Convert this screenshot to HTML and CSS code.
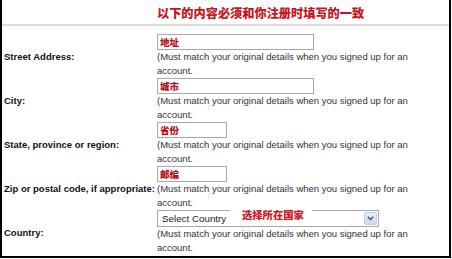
FILE: index.html
```html
<!DOCTYPE html>
<html>
<head>
    <title>Account details</title>
    <link rel="stylesheet" href="styles.css">
</head>
<body>

    <div class="frame">

        <!-- Aviso -->
        <div class="title-row">
            <span class="title">以下的内容必须和你注册时填写的一致</span>
        </div>

        <!-- Formulario -->
        <div class="form-grid">
            <div class="label">Street Address:</div>
            <div class="field">
                <input type="text" class="text-field long" value="地址">
                <p class="hint">(Must match your original details when you signed up for an account.</p>
            </div>

            <div class="label">City:</div>
            <div class="field">
                <input type="text" class="text-field long" value="城市">
                <p class="hint">(Must match your original details when you signed up for an account.</p>
            </div>

            <div class="label">State, province or region:</div>
            <div class="field">
                <input type="text" class="text-field short" value="省份">
                <p class="hint">(Must match your original details when you signed up for an account.</p>
            </div>

            <div class="label">Zip or postal code, if appropriate:</div>
            <div class="field">
                <input type="text" class="text-field short" value="邮编">
                <p class="hint">(Must match your original details when you signed up for an account.</p>
            </div>

            <div class="label">Country:</div>
            <div class="field">
                <div class="select-box">
                    <span class="select-value">Select Country</span>
                    <span class="select-arrow">
                        <svg width="7" height="5" viewBox="0 0 7 5"><path d="M0.8 0.8 L3.5 3.6 L6.2 0.8" fill="none" stroke="#3d4f78" stroke-width="1.4"/></svg>
                    </span>
                    <span class="note">选择所在国家</span>
                </div>
                <p class="hint">(Must match your original details when you signed up for an account.</p>
            </div>
        </div>

    </div>

</body>
</html>
```

FILE: styles.css
```css
body {
    margin: 0;
    background-color: #fff;
    font-family: "Liberation Sans", Arial, "Noto Sans CJK SC", sans-serif;
}

/* Marco negro */
.frame {
    width: 451px;
    height: 258px;
    box-sizing: border-box;
    border-left: 2px solid #000;
    border-right: 2px solid #000;
    border-bottom: 2px solid #000;
}

/* Aviso rojo */
.title-row {
    height: 26px;
    padding-left: 155px;
    border-bottom: 2px solid #dcdcdc;
    box-sizing: border-box;
}

.title {
    display: block;
    padding-top: 6px;
    font-family: "Noto Sans CJK SC", sans-serif;
    font-size: 12.2px;
    line-height: 14px;
    font-weight: 900;
    color: #c8141e;
}

/* Tabla del formulario */
.form-grid {
    display: grid;
    grid-template-columns: 153px 1fr;
    margin-top: 8px;
    padding-left: 2px;
}

.label {
    align-self: center;
    font-size: 9.5px;
    font-weight: bold;
    color: #111;
    white-space: nowrap;
}

.field {
    display: flex;
    flex-direction: column;
    align-items: flex-start;
}

.text-field {
    height: 16px;
    box-sizing: border-box;
    margin: 0;
    padding: 0 2px;
    border: 1px solid #a4a9b0;
    font-family: "Noto Sans CJK SC", sans-serif;
    font-size: 9.5px;
    font-weight: 900;
    color: #b4101a;
    outline: none;
}

.text-field.long {
    width: 157px;
}

.text-field.short {
    width: 70px;
}

.hint {
    width: 256px;
    margin: 0;
    font-size: 9.5px;
    line-height: 14px;
    color: #333;
}

/* Lista de paises */
.select-box {
    position: relative;
    display: flex;
    align-items: center;
    width: 222px;
    height: 17px;
    box-sizing: border-box;
    border: 1px solid #a4a9b0;
    padding: 1px;
}

.select-value {
    flex: 1;
    padding-left: 3px;
    font-size: 9.8px;
    color: #222;
}

.select-arrow {
    display: flex;
    align-items: center;
    justify-content: center;
    width: 13px;
    height: 13px;
    box-sizing: border-box;
    border: 1px solid #bccbe6;
    border-radius: 2px;
    background: linear-gradient(#e6eefa, #c9d8f0);
}

.note {
    position: absolute;
    left: 72px;
    top: -3px;
    width: 82px;
    padding-left: 12px;
    box-sizing: border-box;
    height: 14px;
    background-color: #fff;
    font-family: "Noto Sans CJK SC", sans-serif;
    font-size: 10.3px;
    line-height: 14px;
    font-weight: 900;
    color: #d2141e;
}
```
